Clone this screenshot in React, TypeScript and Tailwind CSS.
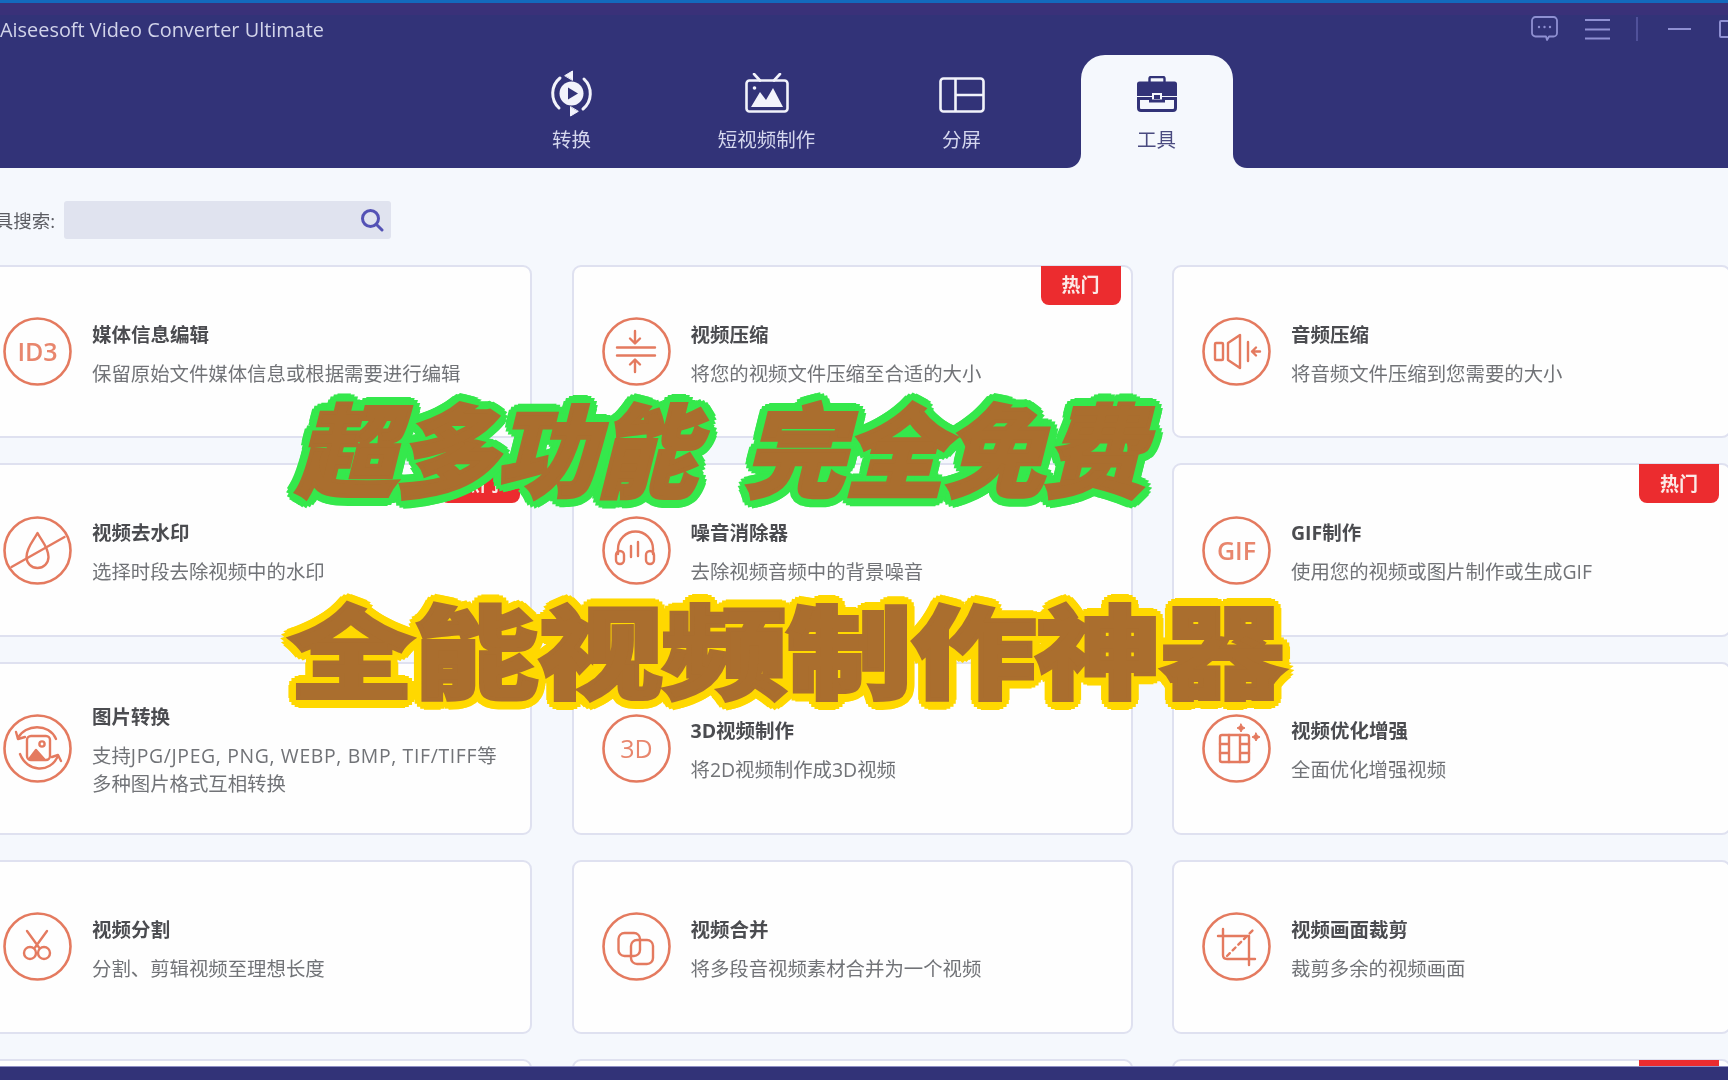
import type { ReactNode } from "react";

const uiFont = "[font-family:'Open_Sans','Noto_Sans_CJK_SC',sans-serif]";

/** Orange ring shared by all tool icons, the glyph is drawn inside it. */
function ToolIcon({ children }: { children: ReactNode }) {
  return (
    <svg
      viewBox="0 0 69 69"
      className="h-[69px] w-[69px] shrink-0 text-[#e47a5f]"
      fill="none"
      stroke="currentColor"
      strokeWidth="2.4"
      strokeLinecap="round"
      strokeLinejoin="round"
    >
      <circle cx="34.5" cy="34.5" r="33" strokeWidth="2.6" />
      {children}
    </svg>
  );
}

function IconLabel({ text, size, weight = 600 }: { text: string; size: number; weight?: number }) {
  return (
    <text
      x="34.5"
      y="34.5"
      dy="0.36em"
      textAnchor="middle"
      fontSize={size}
      fontWeight={weight}
      fill="#e8866d"
      stroke="none"
      fontFamily="'Open Sans', sans-serif"
    >
      {text}
    </text>
  );
}

const icons: Record<string, ReactNode> = {
  id3: <IconLabel text="ID3" size={25} />,
  compress: (
    <>
      <path d="M15 30.5H53M15 38.5H53" />
      <path d="M33 14V26M28 21.5L33 26.5L38 21.5" />
      <path d="M33 55V43M28 47.5L33 42.5L38 47.5" />
    </>
  ),
  audio: (
    <>
      <rect x="13" y="26" width="8" height="17" rx="1" />
      <path d="M26 26L38 18V51L26 43Z" />
      <path d="M46 25V44" />
      <path d="M58 34.5H50M54 30.5L50 34.5L54 38.5" />
    </>
  ),
  watermark: (
    <>
      <path d="M34.5 17C31 24 23.5 31 23.5 41A11 11 0 0 0 45.5 41C45.5 31 38 24 34.5 17Z" />
      <path d="M8.5 51L61.5 21" />
    </>
  ),
  denoise: (
    <>
      <path d="M16 38V33A17.5 17.5 0 0 1 51 33V38" />
      <rect x="14" y="35" width="8" height="13" rx="4" />
      <rect x="44" y="35" width="8" height="13" rx="4" />
      <path d="M29 30V41M36 26V40" />
    </>
  ),
  gif: <IconLabel text="GIF" size={25} />,
  image: (
    <>
      <rect x="24" y="22" width="23" height="24" rx="4" />
      <circle cx="39" cy="30" r="2.6" />
      <path d="M27 44L33 36L41 45Z" fill="currentColor" />
      <path d="M15 24C22 10 46 9 53 25" />
      <path d="M17 40C24 58 47 60 55 42" />
      <path d="M13 18L15 25L22 23" />
      <path d="M49 43L55 41L58 47" />
    </>
  ),
  threeD: <IconLabel text="3D" size={25} weight={500} />,
  enhance: (
    <>
      <rect x="18" y="21" width="29" height="27" rx="2" />
      <path d="M27 21V48M38 21V48M18 30H27M18 39H27M38 30H47M38 39H47" />
      <path d="M39 10L40.4 12.6L43 14L40.4 15.4L39 18L37.6 15.4L35 14L37.6 12.6Z" fill="currentColor" strokeWidth="1" />
      <path d="M54 19L55.4 21.6L58 23L55.4 24.4L54 27L52.6 24.4L50 23L52.6 21.6Z" fill="currentColor" strokeWidth="1" />
    </>
  ),
  split: (
    <>
      <circle cx="27" cy="41" r="6" />
      <circle cx="41" cy="41" r="6" />
      <path d="M24 19L36 35.5M44 19L32 35.5" />
    </>
  ),
  merge: (
    <>
      <rect x="16.5" y="21" width="21.5" height="23" rx="6" />
      <rect x="29" y="28" width="22" height="24" rx="6" />
    </>
  ),
  crop: (
    <>
      <path d="M16 24H47V53" />
      <path d="M21 17V43Q21 47 25 47H53" />
      <path d="M25 44L52 17" strokeDasharray="4 4" />
    </>
  ),
};

type Tool = { icon: string; title: string; desc: ReactNode; hot?: boolean };

const tools: Tool[] = [
  { icon: "id3", title: "媒体信息编辑", desc: "保留原始文件媒体信息或根据需要进行编辑" },
  { icon: "compress", title: "视频压缩", desc: "将您的视频文件压缩至合适的大小", hot: true },
  { icon: "audio", title: "音频压缩", desc: "将音频文件压缩到您需要的大小" },
  { icon: "watermark", title: "视频去水印", desc: "选择时段去除视频中的水印", hot: true },
  { icon: "denoise", title: "噪音消除器", desc: "去除视频音频中的背景噪音" },
  { icon: "gif", title: "GIF制作", desc: "使用您的视频或图片制作或生成GIF", hot: true },
  {
    icon: "image",
    title: "图片转换",
    desc: (
      <>
        支持<span className="tracking-[0.65px]">JPG/JPEG, PNG, WEBP, BMP, TIF/TIFF</span>等
        <br />
        多种图片格式互相转换
      </>
    ),
  },
  { icon: "threeD", title: "3D视频制作", desc: "将2D视频制作成3D视频" },
  { icon: "enhance", title: "视频优化增强", desc: "全面优化增强视频" },
  { icon: "split", title: "视频分割", desc: "分割、剪辑视频至理想长度" },
  { icon: "merge", title: "视频合并", desc: "将多段音视频素材合并为一个视频" },
  { icon: "crop", title: "视频画面裁剪", desc: "裁剪多余的视频画面" },
];

function HotBadge() {
  return (
    <span className="absolute right-[10px] top-[-1px] flex h-[39px] w-[80px] items-center justify-center rounded-b-[8px] bg-[#ec2c2f] text-[19px] font-bold text-[#fbe9e6]">
      热门
    </span>
  );
}

function ToolCard({ tool }: { tool: Tool }) {
  return (
    <div className="relative flex h-[173.4px] items-center rounded-[9px] border-2 border-[#dfe1f0] bg-[#fefefe] pl-[28px]">
      {tool.hot && <HotBadge />}
      <ToolIcon>{icons[tool.icon]}</ToolIcon>
      <div className="ml-[20px] w-[420px] pt-[5px]">
        <div className="text-[19.5px] font-bold leading-[28px] text-[#4b4c50]">{tool.title}</div>
        <div className="mt-[11px] text-[19.4px] leading-[28px] text-[#717377]">{tool.desc}</div>
      </div>
    </div>
  );
}

function TabIcon({ name }: { name: string }) {
  if (name === "convert") {
    return (
      <svg viewBox="0 0 43 47" className="h-[47px] w-[43px]" fill="none" stroke="#f2f3fb" strokeWidth="3" strokeLinecap="round" strokeLinejoin="round">
        <path d="M10 8A20 20 0 0 0 9 38" />
        <path d="M33 39A20 20 0 0 0 34 9" />
        <path d="M15 5.5L22.5 1V10Z" fill="#f2f3fb" strokeWidth="1" />
        <path d="M28 41.5L20.5 46V37Z" fill="#f2f3fb" strokeWidth="1" />
        <circle cx="21.5" cy="23.5" r="12" fill="#f2f3fb" stroke="none" />
        <path d="M18 17.5L28 23.5L18 29.5Z" fill="#323378" stroke="none" />
      </svg>
    );
  }
  if (name === "shorts") {
    return (
      <svg viewBox="0 0 44 40" className="mb-[4px] h-[40px] w-[44px]" fill="none" stroke="#f2f3fb" strokeWidth="2.6" strokeLinecap="round" strokeLinejoin="round">
        <path d="M15 7.5L9 1M29 7.5L35 1" />
        <rect x="1.5" y="7.5" width="41" height="31" rx="3" />
        <circle cx="9.5" cy="15" r="1.8" fill="#f2f3fb" stroke="none" />
        <path d="M6 34L15 19L21 27L28 15L38 34Z" fill="#f2f3fb" stroke="none" />
      </svg>
    );
  }
  if (name === "split") {
    return (
      <svg viewBox="0 0 46 36" className="mb-[4px] h-[36px] w-[46px]" fill="none" stroke="#f2f3fb" strokeWidth="2.6" strokeLinejoin="round">
        <rect x="1.5" y="1.5" width="43" height="33" rx="3" />
        <path d="M16.5 1.5V34.5M16.5 18H44.5" />
      </svg>
    );
  }
  return (
    <svg viewBox="0 0 40 36" className="h-[36px] w-[40px]" fill="none">
      <path d="M12.5 6V2.5A1.5 1.5 0 0 1 14 1H26A1.5 1.5 0 0 1 27.5 2.5V6" stroke="#323378" strokeWidth="2.4" />
      <path d="M0 8A2.5 2.5 0 0 1 2.5 5.5H37.5A2.5 2.5 0 0 1 40 8V20H25V17H15V20H0Z" fill="#323378" />
      <path d="M1.5 22.5H13.5V25H26.5V22.5H38.5V32A2.5 2.5 0 0 1 36 34.5H4A2.5 2.5 0 0 1 1.5 32Z" stroke="#323378" strokeWidth="3" />
      <rect x="17" y="19" width="6" height="4" fill="#323378" />
    </svg>
  );
}

function NavTab({ name, label, active }: { name: string; label: string; active?: boolean }) {
  if (active) {
    return (
      <div className="flex w-[195px] justify-center">
        <div className="relative flex h-[113px] w-[152px] flex-col items-center rounded-t-[24px] bg-[#f5f8fd]">
          <span className="absolute bottom-0 left-[-14px] h-[18px] w-[14px] bg-[#f5f8fd]">
            <span className="block h-full w-full rounded-br-[14px] bg-[#323378]" />
          </span>
          <span className="absolute bottom-0 right-[-14px] h-[18px] w-[14px] bg-[#f5f8fd]">
            <span className="block h-full w-full rounded-bl-[14px] bg-[#323378]" />
          </span>
          <div className="mt-[15px] flex h-[47px] items-center">
            <TabIcon name={name} />
          </div>
          <span className="mt-[9px] text-[19.5px] leading-[28px] text-[#4a4b80]">{label}</span>
        </div>
      </div>
    );
  }
  return (
    <div className="flex h-[113px] w-[195px] flex-col items-center">
      <div className="mt-[15px] flex h-[47px] items-end">
        <TabIcon name={name} />
      </div>
      <span className="mt-[9px] text-[19.5px] leading-[28px] text-[#d5d7ee]">{label}</span>
    </div>
  );
}

function WindowControls() {
  return (
    <div className="absolute right-[-10px] top-[16px] flex items-center text-[#8f90d2]">
      <svg viewBox="0 0 27 26" className="h-[26px] w-[27px]" fill="none" stroke="currentColor" strokeWidth="1.8" strokeLinejoin="round">
        <path d="M4.5 1H22.5A3.5 3.5 0 0 1 26 4.5V17A3.5 3.5 0 0 1 22.5 20.5H18L16 24L15 20.5H4.5A3.5 3.5 0 0 1 1 17V4.5A3.5 3.5 0 0 1 4.5 1Z" />
        <circle cx="8" cy="11" r="1.2" fill="currentColor" stroke="none" />
        <circle cx="13.5" cy="11" r="1.2" fill="currentColor" stroke="none" />
        <circle cx="19" cy="11" r="1.2" fill="currentColor" stroke="none" />
      </svg>
      <svg viewBox="0 0 25 22" className="ml-[27px] h-[22px] w-[25px]" stroke="currentColor" strokeWidth="1.8">
        <path d="M0 2H25M0 11.5H25M0 20.5H25" />
      </svg>
      <span className="ml-[26px] h-[24px] w-[2px] bg-[#50519a]" />
      <span className="ml-[30px] h-[2px] w-[23px] bg-current" />
      <span className="ml-[28px] h-[18px] w-[19px] rounded-[2px] border-2 border-current" />
    </div>
  );
}

export default function App() {
  return (
    <div className={`flex h-[1080px] w-[1728px] flex-col overflow-hidden bg-[#f5f8fd] blur-[0.5px] ${uiFont}`}>
      <header className="relative h-[168px] shrink-0 bg-[#323378]">
        <div className="h-[3px] bg-[#1369bd]" />
        <div className="h-[12px] bg-[#3a3179]" />
        <div className="h-[40px] text-[19.9px] leading-[30px] text-[#d2d4ea]">Aiseesoft Video Converter Ultimate</div>
        <WindowControls />
        <nav className="ml-[474px] flex">
          <NavTab name="convert" label="转换" />
          <NavTab name="shorts" label="短视频制作" />
          <NavTab name="split" label="分屏" />
          <NavTab name="tools" label="工具" active />
        </nav>
      </header>

      <main className="min-h-0 flex-1 overflow-hidden">
        <div className="ml-[-27px] w-[1760px] pt-[33px]">
          <div className="flex h-[38px] items-center">
            <span className="w-[82px] shrink-0 whitespace-nowrap pt-[2px] text-right text-[18.5px] text-[#5c5d63]">工具搜索:</span>
            <div className="ml-[9px] flex h-[38px] w-[327px] items-center justify-end rounded-[3px] bg-[#e0e3ef] pr-[7px]">
              <svg viewBox="0 0 24 24" className="h-[24px] w-[24px]" fill="none" stroke="#5452b5" strokeWidth="3" strokeLinecap="round">
                <circle cx="10.5" cy="10.5" r="8" />
                <path d="M16.5 16.5L22 22" />
              </svg>
            </div>
          </div>
          <div className="mt-[26px] grid grid-cols-[559px_561px_559px] gap-x-[39.5px] gap-y-[25px]">
            {tools.map((tool) => (
              <ToolCard key={tool.title} tool={tool} />
            ))}
            <div className="relative h-[173px] rounded-[9px] border-2 border-[#dfe1f0] bg-[#fefefe]" />
            <div className="relative h-[173px] rounded-[9px] border-2 border-[#dfe1f0] bg-[#fefefe]" />
            <div className="relative h-[173px] rounded-[9px] border-2 border-[#dfe1f0] bg-[#fefefe]">
              <span className="absolute right-[10px] top-[-1px] h-[39px] w-[80px] rounded-b-[8px] bg-[#ec2c2f]" />
            </div>
          </div>
        </div>
      </main>

      <footer className="h-[14px] shrink-0 border-t border-[#8f90c4] bg-[#323378]" />

      {/* Captions burnt over the recording: rounded outline built from text shadows */}
      <div className="absolute left-[296px] top-[396px] whitespace-pre text-[100px] font-black italic leading-none text-[#aa6e2e] [-webkit-text-stroke:4px_#aa6e2e] [font-family:'Noto_Sans_CJK_SC',sans-serif] [word-spacing:25px] [text-shadow:10px_0_#35e84c,9.2px_3.8px_#35e84c,7.1px_7.1px_#35e84c,3.8px_9.2px_#35e84c,0_10px_#35e84c,-3.8px_9.2px_#35e84c,-7.1px_7.1px_#35e84c,-9.2px_3.8px_#35e84c,-10px_0_#35e84c,-9.2px_-3.8px_#35e84c,-7.1px_-7.1px_#35e84c,-3.8px_-9.2px_#35e84c,0_-10px_#35e84c,3.8px_-9.2px_#35e84c,7.1px_-7.1px_#35e84c,9.2px_-3.8px_#35e84c,5px_0_#35e84c,3.5px_3.5px_#35e84c,0_5px_#35e84c,-3.5px_3.5px_#35e84c,-5px_0_#35e84c,-3.5px_-3.5px_#35e84c,0_-5px_#35e84c,3.5px_-3.5px_#35e84c]">
        超多功能 完全免费
      </div>
      <div className="absolute left-[289px] top-[597px] origin-left scale-x-[1.245] whitespace-pre text-[100px] font-black leading-none text-[#aa6e2e] [-webkit-text-stroke:4px_#aa6e2e] [font-family:'Noto_Sans_CJK_SC',sans-serif] [text-shadow:8px_0_#ffd800,7.4px_3.8px_#ffd800,5.7px_7.1px_#ffd800,3.1px_9.2px_#ffd800,0_10px_#ffd800,-3.1px_9.2px_#ffd800,-5.7px_7.1px_#ffd800,-7.4px_3.8px_#ffd800,-8px_0_#ffd800,-7.4px_-3.8px_#ffd800,-5.7px_-7.1px_#ffd800,-3.1px_-9.2px_#ffd800,0_-10px_#ffd800,3.1px_-9.2px_#ffd800,5.7px_-7.1px_#ffd800,7.4px_-3.8px_#ffd800,4px_0_#ffd800,2.8px_3.5px_#ffd800,0_5px_#ffd800,-2.8px_3.5px_#ffd800,-4px_0_#ffd800,-2.8px_-3.5px_#ffd800,0_-5px_#ffd800,2.8px_-3.5px_#ffd800]">
        全能视频制作神器
      </div>
    </div>
  );
}
